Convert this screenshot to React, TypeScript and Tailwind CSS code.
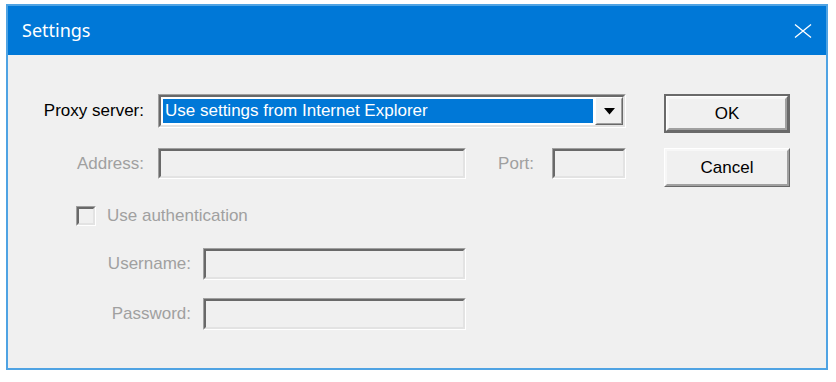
import { ReactNode } from 'react';

const ui = { fontFamily: '"Liberation Sans", Arial, sans-serif' };

function Sunken({ className = '', children }: { className?: string; children?: ReactNode }) {
  return (
    <div className={`border border-t-[#a0a0a0] border-l-[#a0a0a0] border-b-white border-r-white ${className}`}>
      <div className="h-full w-full border-2 border-t-[#696969] border-l-[#696969] border-b-[#e3e3e3] border-r-[#e3e3e3]">
        {children}
      </div>
    </div>
  );
}

function Button({ label, isDefault }: { label: string; isDefault?: boolean }) {
  const inner = (
    <div className="h-full w-full border border-t-white border-l-white border-b-[#696969] border-r-[#696969]">
      <div className="flex h-full w-full items-center justify-center border-2 border-t-[#f7f7f7] border-l-[#f7f7f7] border-b-[#a0a0a0] border-r-[#a0a0a0] text-[17px] text-black">
        {label}
      </div>
    </div>
  );
  return (
    <div className={`h-[39px] w-[126px] ${isDefault ? 'border-2 border-[#6a6a6a]' : ''}`}>{inner}</div>
  );
}

export default function App() {
  return (
    <div className="h-[382px] w-[836px] bg-white pl-[6px] pt-[4px]" style={ui}>
      <div className="flex h-[366px] w-[822px] flex-col border-2 border-[#4fa3e3] bg-[#f0f0f0]">
        {/* title bar */}
        <div className="flex h-[49px] items-center justify-between bg-[#0078d7] pl-[14px] pr-[12px]">
          <span className="text-[18px] text-white" style={{ fontFamily: '"Noto Sans", "Open Sans", sans-serif' }}>
            Settings
          </span>
          <svg width="18" height="14" viewBox="0 0 18 14" className="mr-[2px]">
            <path d="M1 0.5 L17 13.5 M17 0.5 L1 13.5" stroke="white" strokeWidth="1.3" fill="none" />
          </svg>
        </div>

        <div className="flex flex-col pt-[39px]">
          {/* proxy row */}
          <div className="flex items-start">
            <div className="flex h-[34px] w-[136px] items-center justify-end text-[17px] text-black">Proxy server:</div>
            <Sunken className="ml-[14px] h-[34px] w-[468px]">
              <div className="flex h-full items-stretch bg-white">
                <div className="m-[2px] flex flex-1 items-center bg-[#0078d7] pl-[2px] text-[17px] text-white">
                  Use settings from Internet Explorer
                </div>
                <div className="flex w-[28px] items-center justify-center border border-t-white border-l-white border-b-[#696969] border-r-[#696969] bg-[#f0f0f0]">
                  <div className="flex h-full w-full items-center justify-center border border-b-[#a0a0a0] border-r-[#a0a0a0] border-t-[#f0f0f0] border-l-[#f0f0f0]">
                    <svg width="11" height="7" viewBox="0 0 11 7">
                      <path d="M0 0 H11 L5.5 6.5 Z" fill="black" />
                    </svg>
                  </div>
                </div>
              </div>
            </Sunken>
            <div className="ml-[38px]">
              <Button label="OK" isDefault />
            </div>
          </div>

          {/* address row */}
          <div className="mt-[15px] flex items-start">
            <div className="flex h-[31px] w-[136px] items-center justify-end text-[17px] text-[#a0a0a0]">Address:</div>
            <Sunken className="ml-[14px] h-[31px] w-[308px]" />
            <div className="flex h-[31px] w-[68px] items-center justify-end text-[17px] text-[#a0a0a0]">Port:</div>
            <Sunken className="ml-[18px] h-[31px] w-[74px]" />
            <div className="ml-[38px]">
              <Button label="Cancel" />
            </div>
          </div>

          {/* auth checkbox */}
          <div className="mt-[19px] flex items-center pl-[68px]">
            <Sunken className="h-[20px] w-[20px]" />
            <span className="ml-[11px] text-[17px] leading-[20px] text-[#a0a0a0]">Use authentication</span>
          </div>

          {/* username */}
          <div className="mt-[22px] flex items-center">
            <div className="flex h-[32px] w-[183px] items-center justify-end text-[17px] text-[#a0a0a0]">Username:</div>
            <Sunken className="ml-[12px] h-[32px] w-[263px]" />
          </div>

          {/* password */}
          <div className="mt-[18px] flex items-center">
            <div className="flex h-[32px] w-[183px] items-center justify-end text-[17px] text-[#a0a0a0]">Password:</div>
            <Sunken className="ml-[12px] h-[32px] w-[263px]" />
          </div>
        </div>
      </div>
    </div>
  );
}
